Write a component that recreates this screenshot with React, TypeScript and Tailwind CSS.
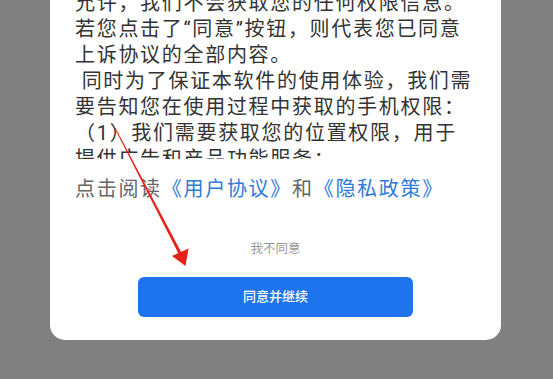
import React from "react";

export default function App() {
  return (
    <div className="relative h-[379px] w-[553px] overflow-hidden bg-[#808080] font-['Roboto','Noto_Sans_CJK_SC',sans-serif]">
      <div className="ml-[50px] w-[451px] rounded-b-[15px] bg-white px-[25px] pb-[23px]">
        <div className="h-[159px] overflow-hidden">
          <p className="-mt-[10px] w-[410px] text-[20px] leading-[26px] tracking-[1.7px] text-[#333333]">
            允许，我们不会获取您的任何权限信息。
            <br />
            若您点击了“同意”按钮，则代表您已同意
            <br />
            上诉协议的全部内容。
            <br />
            &nbsp;同时为了保证本软件的使用体验，我们需
            <br />
            要告知您在使用过程中获取的手机权限：
            <br />
            （1）我们需要获取您的位置权限，用于
            <br />
            提供广告和产品功能服务：
            <br />
            （2）我们需要获取您的存储权限。
          </p>
        </div>
        <p className="mt-[17px] text-[20px] leading-[26px] tracking-[1.7px] text-[#666666]">
          点击阅读<span className="text-[#2f7bd8]">《用户协议》</span>和
          <span className="text-[#2f7bd8]">《隐私政策》</span>
        </p>
        <div className="mt-[38px] flex justify-center text-[12.5px] leading-[18px] text-[#999999]">
          我不同意
        </div>
        <div className="mt-[19px] flex justify-center">
          <button className="flex h-[40px] w-[275px] items-center justify-center rounded-[6px] bg-[#1d74ec] text-[13px] font-medium text-white">
            同意并继续
          </button>
        </div>
      </div>
      <svg
        className="pointer-events-none absolute left-0 top-0"
        width="553"
        height="379"
        viewBox="0 0 553 379"
      >
        <polygon
          points="114.6,128.3 115.4,127.7 181.4,252.5 178.6,253.8"
          fill="#e5231b"
        />
        <polygon points="172,256 188.5,248.5 185.5,266" fill="#e5231b" />
      </svg>
    </div>
  );
}
